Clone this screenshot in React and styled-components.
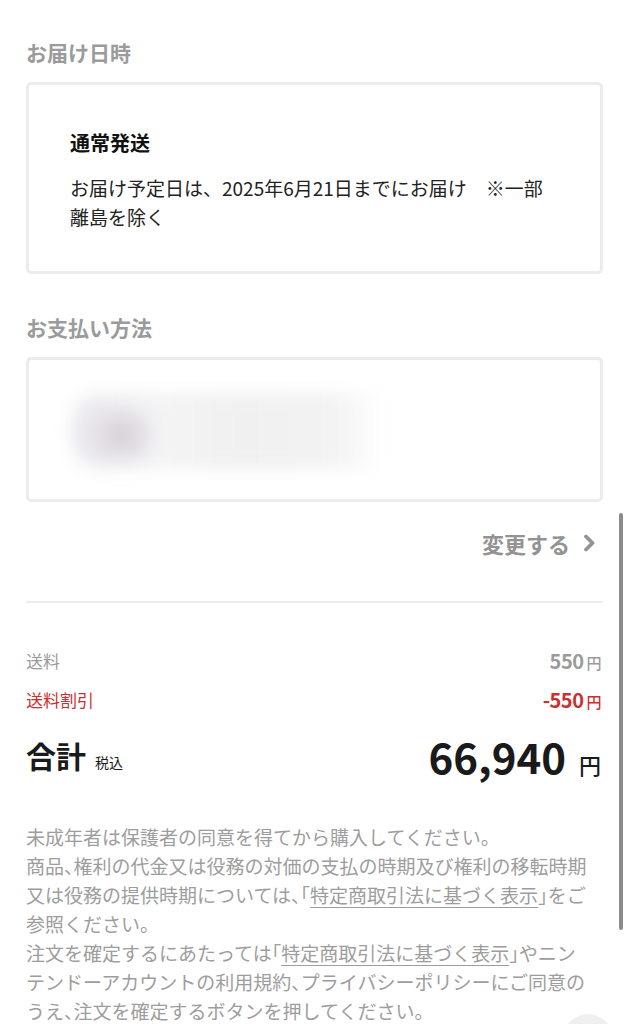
import React from 'react';
import styled, { createGlobalStyle } from 'styled-components';

const GlobalStyle = createGlobalStyle`
  * { box-sizing: border-box; }
  html, body {
    margin: 0;
    padding: 0;
    background: #fff;
    overflow: hidden;
  }
  body {
    font-family: "Noto Sans CJK JP", "Noto Sans", sans-serif;
    color: #222;
  }
`;

const Page = styled.main`
  position: relative;
  width: 629px;
  height: 1024px;
  overflow: hidden;
  padding: 37px 26px 0;
`;

const SectionTitle = styled.h2`
  margin: ${p => (p.$first ? '0' : '38px')} 0 15px;
  font-size: 21px;
  line-height: 30px;
  font-weight: 700;
  color: #9b9b9b;
`;

const Card = styled.div`
  border: 3px solid #ececec;
  border-radius: 5px;
  padding: ${p => p.$padding};
`;

const ShipTitle = styled.div`
  font-size: 20px;
  line-height: 31px;
  font-weight: 700;
  color: #111;
  margin-bottom: 15px;
`;

const ShipText = styled.p`
  margin: 0;
  font-size: 19px;
  line-height: 29px;
  color: #222;
`;

const Punct = styled.span`
  font-feature-settings: "halt";
`;

const Blur = styled.div`
  width: 312px;
  height: 76px;
  margin: 3px 0 0 2px;
  border-radius: 30px 8px 8px 30px;
  background:
    radial-gradient(ellipse 40px 34px at 16% 55%, #d2ccd3 0, #e2dee4 50%, rgba(242, 241, 244, 0) 100%),
    linear-gradient(90deg, #ebe9ee 0%, #f4f4f5 30%, #f0f0f0 55%, #f3f3f3 85%, rgba(255, 255, 255, 0) 100%);
  filter: blur(8px);
`;

const ChangeRow = styled.div`
  display: flex;
  justify-content: flex-end;
  align-items: center;
  gap: 13px;
  margin-top: 26px;
  padding-right: 8px;
  font-size: 22px;
  line-height: 30px;
  font-weight: 700;
  color: #939393;
`;

const Divider = styled.hr`
  margin: 43px 0 0;
  border: none;
  height: 2px;
  background: #ededed;
`;

const Rows = styled.div`
  display: flex;
  flex-direction: column;
  gap: 12px;
  margin-top: 44px;
`;

const Row = styled.div`
  display: flex;
  justify-content: space-between;
  align-items: center;
  height: 27px;
  color: ${p => p.$color};
`;

const RowLabel = styled.span`
  font-size: 17px;
`;

const RowValue = styled.span`
  display: flex;
  align-items: baseline;
  gap: 3px;
  font-size: 20px;
  font-weight: 700;
  letter-spacing: -0.5px;
  padding-right: 2px;
`;

const Yen = styled.span`
  font-size: ${p => p.$size || '15px'};
  font-weight: 500;
`;

const TotalRow = styled.div`
  display: flex;
  justify-content: space-between;
  align-items: center;
  height: 56px;
  margin-top: 14px;
  color: #1a1a1a;
`;

const TotalLabel = styled.span`
  display: flex;
  align-items: baseline;
  gap: 9px;
  font-size: 30px;
  font-weight: 700;
  small {
    font-size: 14px;
    font-weight: 400;
  }
`;

const TotalValue = styled.span`
  display: flex;
  align-items: baseline;
  gap: 13px;
  font-size: 42px;
  font-weight: 700;
  padding-right: 2px;
`;

const Notes = styled.div`
  margin-top: 39px;
  font-size: 19px;
  line-height: 29px;
  color: #9d9d9d;
  white-space: nowrap;
  p { margin: 0; }
  a {
    color: inherit;
    text-decoration: underline;
    text-underline-offset: 4px;
  }
`;

const Scrollbar = styled.div`
  position: absolute;
  left: 619px;
  top: 513px;
  width: 4px;
  height: 417px;
  border-radius: 2px;
  background: #8b8b8b;
`;

const FloatButton = styled.div`
  position: absolute;
  left: 563px;
  top: 1014px;
  width: 50px;
  height: 50px;
  border-radius: 50%;
  background: #f0f0f0;
`;

const Chevron = () => (
  <svg width="12" height="18" viewBox="0 0 12 18">
    <path d="M3 2.5 L9.5 9 L3 15.5" fill="none" stroke="#939393" strokeWidth="3.8" strokeLinecap="round" strokeLinejoin="round" />
  </svg>
);

const LawLink = () => (
  <>
    <Punct>「</Punct>
    <a href="#">特定商取引法に基づく表示</a>
    <Punct>」</Punct>
  </>
);

export default function App() {
  return (
    <Page>
      <GlobalStyle />
      <SectionTitle $first>お届け日時</SectionTitle>
      <Card $padding="42px 52px 40px 41px">
        <ShipTitle>通常発送</ShipTitle>
        <ShipText>お届け予定日は、2025年6月21日までにお届け　※一部離島を除く</ShipText>
      </Card>

      <SectionTitle>お支払い方法</SectionTitle>
      <Card $padding="30px 40px 30px">
        <Blur />
      </Card>

      <ChangeRow>
        変更する
        <Chevron />
      </ChangeRow>

      <Divider />

      <Rows>
        <Row $color="#9b9b9b">
          <RowLabel>送料</RowLabel>
          <RowValue>550<Yen>円</Yen></RowValue>
        </Row>
        <Row $color="#cc2f2f">
          <RowLabel>送料割引</RowLabel>
          <RowValue>-550<Yen>円</Yen></RowValue>
        </Row>
      </Rows>

      <TotalRow>
        <TotalLabel>合計<small>税込</small></TotalLabel>
        <TotalValue>66,940<Yen $size="22px">円</Yen></TotalValue>
      </TotalRow>

      <Notes>
        <p>未成年者は保護者の同意を得てから購入してください。</p>
        <p>
          商品<Punct>、</Punct>権利の代金又は役務の対価の支払の時期及び権利の移転時期<br />
          又は役務の提供時期については<Punct>、</Punct><LawLink />をご<br />
          参照ください。
        </p>
        <p>
          注文を確定するにあたっては<LawLink />やニン<br />
          テンドーアカウントの利用規約<Punct>、</Punct>プライバシーポリシーにご同意の<br />
          うえ<Punct>、</Punct>注文を確定するボタンを押してください。
        </p>
      </Notes>

      <Scrollbar />
      <FloatButton />
    </Page>
  );
}
